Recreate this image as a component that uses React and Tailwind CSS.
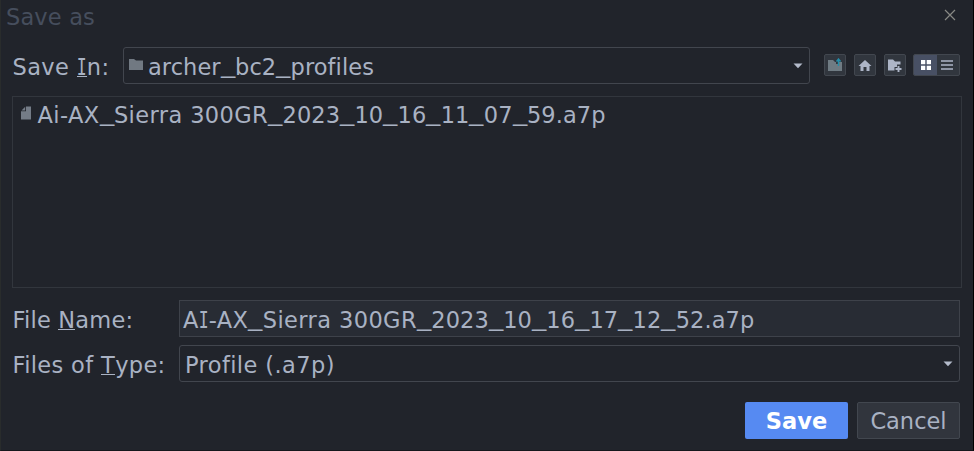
import React from "react";

// Capital I with slab serifs.
function SlabI() {
  return <span className="-mx-[1.8px] inline-block scale-x-[0.73] font-['DejaVu_Sans_Mono',monospace] tracking-normal">I</span>;
}

// Underscores are stretched to the width of a digit.
function Name({ text }) {
  return text.split(/(_|I)/).map((part, i) =>
    part === "_" ? (
      <span key={i} className="inline-block w-[14.35px] origin-left -translate-y-[2px] scale-x-[1.27] tracking-normal">_</span>
    ) : part === "I" ? (
      <SlabI key={i} />
    ) : (
      <span key={i} className={/[A-Z]/.test(part) ? "tracking-[0.4px]" : "tracking-[0.07px]"}>{part}</span>
    )
  );
}

function Key({ children }) {
  return <span className="relative inline-block h-[20px] border-b border-[#a9b2c3] leading-[20px]">{children}</span>;
}

function Caret({ className }) {
  return (
    <svg width="10" height="6" viewBox="0 0 10 6" className={className}>
      <path d="M0.5 0.5H9.5L5 5.2Z" fill="#b4bbcb" />
    </svg>
  );
}

function Tool({ children }) {
  return (
    <button className="flex h-[22px] w-[22px] items-center justify-center rounded-[2px] border border-[#42474f] bg-[#31363e]">
      {children}
    </button>
  );
}

export default function App() {
  return (
    <main className="flex h-[451px] w-[974px] flex-col overflow-hidden border-r border-b border-l border-r-black border-b-[#15171c] border-l-[#292c2c] bg-[#21242b] font-['DejaVu_Sans',sans-serif] text-[22.5px] leading-[26px] whitespace-pre text-[#a9b2c3]">
      <header className="flex h-[47px] justify-between pt-[4px] pr-[17px] pl-[5px] text-[#464e5d]">
        <h1 className="tracking-[0.15px]">Save as</h1>
        <svg width="12" height="12" viewBox="0 0 12 12" className="mt-[5px]" fill="none" stroke="#888984" strokeWidth="1.2">
          <path d="M1 1L11 11M11 1L1 11" />
        </svg>
      </header>

      <section className="flex h-[49px] pl-[11.5px]">
        <div className="w-[110.5px] pt-[7px] tracking-[0.4px]">Save <Key><SlabI /></Key>n:</div>
        <div className="flex h-[37px] w-[687px] rounded-[3px] border border-[#42464e] pl-[5px]">
          <svg width="15" height="12" viewBox="0 0 15 12" className="mt-[11px]">
            <path d="M0 0H5L7 1.5H14V11H0Z" fill="#717982" />
          </svg>
          <div className="ml-[4px] pt-[6px]"><Name text="archer_bc2_profiles" /></div>
          <Caret className="mt-[15px] mr-[6px] ml-auto" />
        </div>
        <div className="ml-[14px] flex gap-[8px] pt-[7px]">
          <Tool>
            <svg width="16" height="14" viewBox="0 0 16 14" className="shrink-0">
              <path d="M1 2H6L8 4H9V6H12V4H15V13H1Z" fill="#6f7b83" />
              <path d="M11.5 8V2.2M9.5 3.5L11.5 1L13.5 3.5" fill="none" stroke="#258da9" strokeWidth="1.4" />
            </svg>
          </Tool>
          <Tool>
            <svg width="14" height="13" viewBox="0 0 14 13" className="-ml-[1px] shrink-0">
              <path d="M7 1L13.5 7H11.5V12H8.5V8H5.5V12H2.5V7H0.5Z" fill="#adb5c7" />
            </svg>
          </Tool>
          <Tool>
            <svg width="16" height="14" viewBox="0 0 16 14" className="shrink-0">
              <path d="M1 1.5H6L8 3.5H13.5V6.5H10V9H7.5V12.5H1Z" fill="#adb5c7" />
              <path d="M11.5 8V14M8.5 11H14.5" stroke="#adb5c7" strokeWidth="1.9" />
            </svg>
          </Tool>
          <div className="-ml-[1px] flex h-[22px] w-[47px] overflow-hidden rounded-[2px] border border-[#42474f] bg-[#31363e]">
            <div className="flex w-[23px] items-center justify-center bg-[#485064]">
              <svg width="10" height="10" viewBox="0 0 10 10" className="ml-[1px]" fill="white">
                <path d="M0 0H4.3V4.3H0ZM5.7 0H10V4.3H5.7ZM0 5.7H4.3V10H0ZM5.7 5.7H10V10H5.7Z" />
              </svg>
            </div>
            <div className="flex w-[20px] items-center justify-center">
              <svg width="12" height="10" viewBox="0 0 12 10" stroke="#adb5c7" strokeWidth="1.5">
                <path d="M0 1H12M0 5H12M0 9H12" />
              </svg>
            </div>
          </div>
        </div>
      </section>

      <section className="ml-[11px] flex h-[192px] w-[950px] shrink-0 border border-[#32363d] pl-[8px]">
        <svg width="11" height="14" viewBox="0 0 11 14" className="mt-[9px]">
          <path d="M5 0.5H10V13.5H0V5.2H5ZM4.2 0.8V4.4H0.5Z" fill="#747c87" />
        </svg>
        <div className="ml-[5.5px] pt-[5px]"><Name text="Ai-AX_Sierra 300GR_2023_10_16_11_07_59.a7p" /></div>
      </section>

      <section className="mt-[12px] flex h-[37px] pl-[11.5px]">
        <div className="w-[166.5px] pt-[7px] tracking-[0.2px]">File <Key>N</Key>ame:</div>
        <div className="h-[37px] w-[781px] border border-[#3e424a] bg-[#282c34] pt-[6px] pl-[3px]">
          <Name text="AI-AX_Sierra 300GR_2023_10_16_17_12_52.a7p" />
        </div>
      </section>

      <section className="mt-[8px] flex h-[37px] pl-[11.5px]">
        <div className="w-[166.5px] pt-[7px] tracking-[0.35px]">Files of <Key>T</Key>ype:</div>
        <div className="flex h-[37px] w-[781px] rounded-[3px] border border-[#42464e] pl-[5px]">
          <div className="pt-[6px] tracking-[0.4px]">Profile (.a7p)</div>
          <Caret className="mt-[15px] mr-[6px] ml-auto" />
        </div>
      </section>

      <footer className="mt-[20px] flex justify-end gap-[9px] pr-[13px]">
        <button className="h-[37px] w-[103px] rounded-[2px] bg-[#568af2] font-bold text-white">Save</button>
        <button className="h-[37px] w-[103px] rounded-[2px] border border-[#42474f] bg-[#31353d]">Cancel</button>
      </footer>
    </main>
  );
}
